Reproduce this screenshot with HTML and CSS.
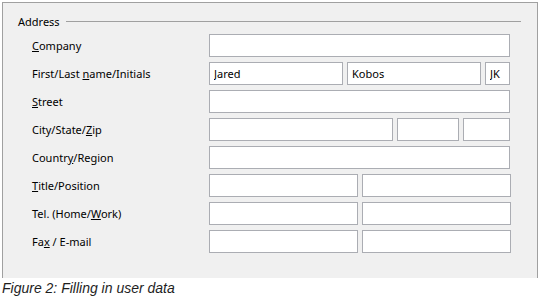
FILE: index.html
```html
<!DOCTYPE html>
<html>
<head>
    <link rel="stylesheet" href="styles.css">
</head>
<body>
    <div class="dialog">
        <div class="group-head">
            <span class="group-title">Address</span>
            <span class="group-line"></span>
        </div>
        <div class="rows">
            <div class="row">
                <label class="label"><u>C</u>ompany</label>
                <div class="fields"><input class="field w-full" type="text"></div>
            </div>
            <div class="row">
                <label class="label">First/Last <u>n</u>ame/Initials</label>
                <div class="fields">
                    <input class="field w-name" type="text" value="Jared">
                    <input class="field w-name" type="text" value="Kobos">
                    <input class="field w-init" type="text" value="JK">
                </div>
            </div>
            <div class="row">
                <label class="label"><u>S</u>treet</label>
                <div class="fields"><input class="field w-full" type="text"></div>
            </div>
            <div class="row">
                <label class="label">City/State/<u>Z</u>ip</label>
                <div class="fields">
                    <input class="field w-city" type="text">
                    <input class="field w-state" type="text">
                    <input class="field w-zip" type="text">
                </div>
            </div>
            <div class="row">
                <label class="label">Countr<u>y</u>/Region</label>
                <div class="fields"><input class="field w-full" type="text"></div>
            </div>
            <div class="row">
                <label class="label"><u>T</u>itle/Position</label>
                <div class="fields">
                    <input class="field w-half" type="text">
                    <input class="field w-half" type="text">
                </div>
            </div>
            <div class="row">
                <label class="label">Tel. (Home/<u>W</u>ork)</label>
                <div class="fields">
                    <input class="field w-half" type="text">
                    <input class="field w-half" type="text">
                </div>
            </div>
            <div class="row">
                <label class="label">Fa<u>x</u> / E-mail</label>
                <div class="fields">
                    <input class="field w-half" type="text">
                    <input class="field w-half" type="text">
                </div>
            </div>
        </div>
    </div>
    <p class="caption">Figure 2: Filling in user data</p>
</body>
</html>
```

FILE: styles.css
```css
body {
    margin: 0;
    background: #ffffff;
    font-family: 'Noto Sans', sans-serif;
    font-size: 11px;
    color: #000000;
}

.dialog {
    margin: 2px 2px 0 2px;
    height: 265px;
    padding: 10px 16px 0 15px;
    background: #f0f0f0;
    border: 1px solid #a0a0a0;
    border-bottom: none;
}

.group-head {
    display: flex;
    align-items: center;
    gap: 6px;
    height: 16px;
    margin-bottom: 5px;
}

.group-line {
    flex: 1;
    border-top: 1px solid #a0a0a0;
}

.rows {
    display: flex;
    flex-direction: column;
    gap: 5px;
    margin-left: 14px;
}

.row {
    display: flex;
    align-items: center;
    height: 23px;
}

.label {
    width: 177px;
}

.fields {
    display: flex;
    gap: 4px;
}

.field {
    box-sizing: border-box;
    height: 23px;
    margin: 0;
    padding: 0 4px;
    border: 1px solid #abadb3;
    background: #ffffff;
    font-family: 'Noto Sans', sans-serif;
    font-size: 11px;
    color: #000000;
}

.w-full { width: 301px; }
.w-name { width: 134px; }
.w-init { width: 25px; }
.w-city { width: 184px; }
.w-state { width: 62px; }
.w-zip { width: 47px; }
.w-half { width: 149px; }

.caption {
    margin: 2px 0 0 2px;
    font-family: 'Liberation Sans', Arial, sans-serif;
    font-style: italic;
    font-size: 14px;
    line-height: 16px;
    color: #1e1e1e;
}
```
